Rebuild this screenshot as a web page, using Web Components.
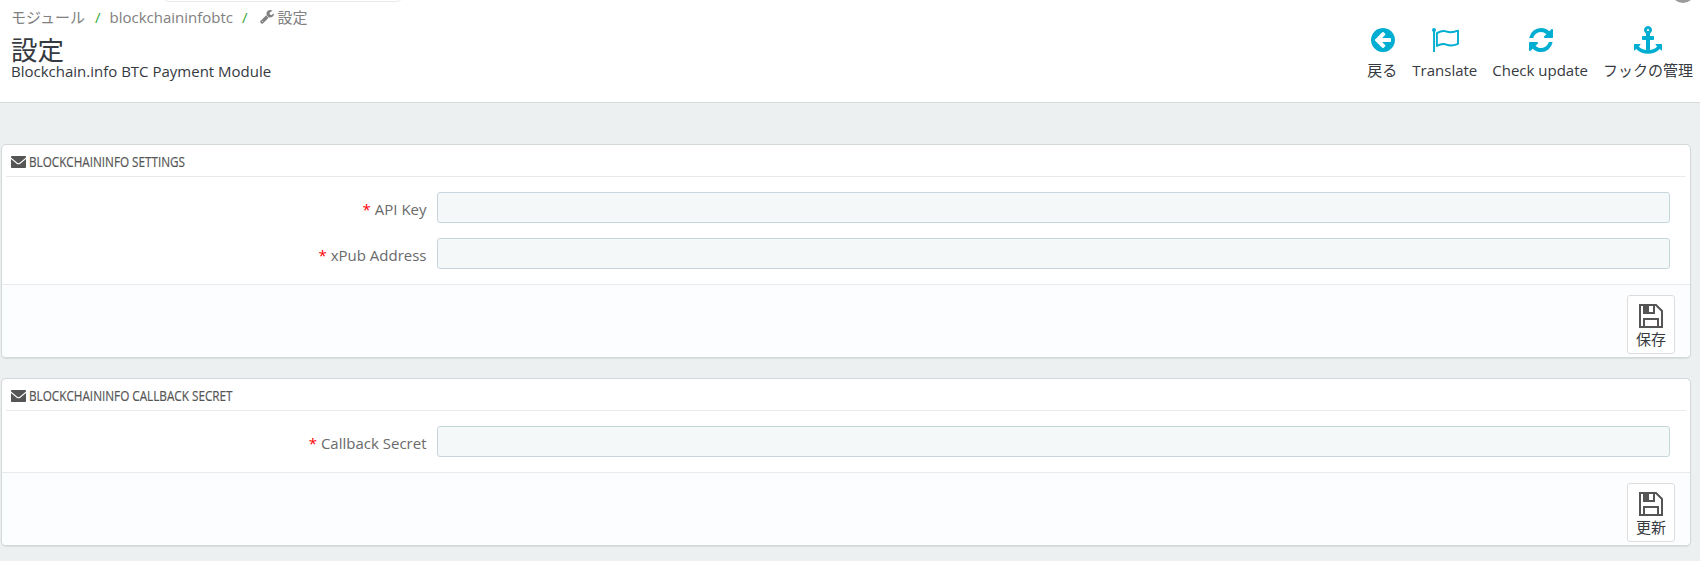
<!DOCTYPE html>
<html lang="ja">
<head>
<meta charset="utf-8">
<title>設定</title>
<style>
html,body{margin:0;height:100%}
body{background:#ecf0f1;font:15px/20px "Open Sans","Noto Sans CJK JP",sans-serif;color:#363a41;overflow:hidden}
</style>
</head>
<body>
<admin-page></admin-page>
<script>
const ICONS = {
  back: ['128 128 1536 1536', '<path d="M1408 960v-128q0-26-19-45t-45-19h-502l189-189q19-19 19-45t-19-45l-91-91q-18-18-45-18t-45 18l-362 362-91 91q-18 18-18 45t18 45l91 91 362 362q18 18 45 18t45-18l91-91q18-18 18-45t-18-45l-189-189h502q26 0 45-19t19-45zm256-64q0 209-103 385.5t-279.5 279.5-385.5 103-385.5-103-279.5-279.5-103-385.5 103-385.5 279.5-279.5 385.5-103 385.5 103 279.5 279.5 103 385.5z"/>'],
  refresh: ['128 128 1536 1536', '<path d="M1639 1056q0 5-1 7-64 268-268 434.5t-478 166.5q-146 0-282.5-55t-243.5-157l-129 129q-19 19-45 19t-45-19-19-45v-448q0-26 19-45t45-19h448q26 0 45 19t19 45-19 45l-137 137q71 66 161 102t187 36q134 0 250-65t186-179q11-17 53-117 8-23 30-23h192q13 0 22.5 9.5t9.5 22.5zm25-800v448q0 26-19 45t-45 19h-448q-26 0-45-19t-19-45 19-45l138-138q-148-137-349-137-134 0-250 65t-186 179q-11 17-53 117-8 23-30 23h-199q-13 0-22.5-9.5t-9.5-22.5v-7q65-268 270-434.5t480-166.5q146 0 284 55.5t245 156.5l130-129q19-19 45-19t45 19 19 45z"/>'],
  anchor: ['0 0 1792 1792', '<path d="M960 256q0-26-19-45t-45-19-45 19-19 45 19 45 45 19 45-19 19-45zm832 928v352q0 22-20 30-8 2-12 2-13 0-23-9l-93-93q-119 143-318.5 226.5t-429.5 83.5-429.5-83.500-318.5-226.500l-93 93q-9 9-23 9-4 0-12-2-20-8-20-30v-352q0-14 9-23t23-9h352q22 0 30 20 8 19-7 35l-100 100q67 91 189.500 153.500t271.500 82.500v-647h-192q-26 0-45-19t-19-45v-128q0-26 19-45t45-19h192v-163q-58-34-93-92.500t-35-128.500q0-106 75-181t181-75 181 75 75 181q0 70-35 128.500t-93 92.500v163h192q26 0 45 19t19 45v128q0 26-19 45t-45 19h-192v647q149-20 271.500-82.500t189.500-153.500l-100-100q-15-16-7-35 8-20 30-20h352q14 0 23 9t9 23z"/>'],
  wrench: ['64 128 1664 1664', '<path d="M448 1472q0-26-19-45t-45-19-45 19-19 45 19 45 45 19 45-19 19-45zm644-420l-682 682q-37 37-90 37-52 0-91-37l-106-108q-38-36-38-90 0-53 38-91l681-681q39 98 114.500 173.500t173.500 114.500zm634-435q0 39-23 106-47 134-164.500 217.500t-258.500 83.500q-185 0-316.500-131.500t-131.500-316.500 131.500-316.500 316.500-131.500q58 0 121.500 16.500t107.500 46.500q16 11 16 28t-16 28l-293 169v224l193 107q5-3 79-48.500t135.500-81 70.500-35.500q15 0 23.500 10t8.500 25z"/>'],
  flag: ['0 0 27 24', '<circle cx="2" cy="2" r="2"/><path d="M1.100 2h1.900v22h-1.900z"/><path d="M4.900 5.100C8 3.400 11 2.300 14 3.400s7 1.200 12-.7v13.100c-5 2.200-8 2.200-11.500.8-3.200-1.200-6.300-.5-9.600 1.300z" fill="none" stroke="currentColor" stroke-width="1.900" stroke-linejoin="round"/>'],
  envelope: ['0 0 15 12', '<path d="M.8 0h13.400q.8 0 .8.800v.7L8.700 6.700q-1.200.9-2.400 0L0 1.500V.8Q0 0 .8 0z"/><path d="M0 3l5.700 4.700q1.800 1.200 3.600 0L15 3v8.200q0 .8-.8.800H.8q-.8 0-.8-.8z"/>'],
  save: ['0 0 24 24', '<path d="M1 1h16l6 6v16H1z" fill="none" stroke="currentColor" stroke-width="2"/><path d="M4 1h6v9H4z"/><path d="M5 1v8h10V1M5 23v-8h14v8" fill="none" stroke="currentColor" stroke-width="2"/>'],
};
const define = (name, html) => customElements.define(name, class extends HTMLElement {
  connectedCallback() {
    if (this.shadowRoot) return;
    const t = document.createElement('template');
    t.innerHTML = typeof html === 'function' ? html(this) : html;
    this.attachShadow({mode: 'open'}).append(t.content.cloneNode(true));
  }
});

define('ui-icon', el => {
  const [box, art] = ICONS[el.getAttribute('name')];
  return `<style>:host{display:inline-block;flex:none}svg{display:block;width:100%;height:100%}</style>
  <svg viewBox="${box}" fill="currentColor" preserveAspectRatio="none">${art}</svg>`;
});

define('bread-crumb', `<style>
:host{display:flex;align-items:center;height:20px;color:#808080;white-space:nowrap}
i{font-style:normal;color:#3aa935;margin:0 9px}
i:first-of-type{margin-left:10px}
ui-icon{width:14px;height:14px;margin:0 4px 0 3px}
</style><span>モジュール</span><i>/</i><span>blockchaininfobtc</span><i>/</i><ui-icon name="wrench"></ui-icon><span>設定</span>`);

define('tool-action', el => `<style>
:host{display:flex;flex-direction:column;align-items:center;white-space:nowrap}
.box{height:32px;display:flex;align-items:center;color:#00aed2;padding-left:${el.getAttribute('nudge') || 0}px}
ui-icon{width:${el.getAttribute('w')}px;height:${el.getAttribute('h')}px}
span{margin-top:4px}
</style><div class="box"><ui-icon name="${el.getAttribute('icon')}"></ui-icon></div><span><slot></slot></span>`);

define('page-head', `<style>
:host{display:flex;justify-content:space-between;box-sizing:border-box;height:103px;background:#fff;border-bottom:1px solid #d8dbde;position:relative;overflow:hidden}
.left{padding:7px 0 0 11px}
h1{font-size:26.500px;line-height:22px;font-weight:400;margin:12px 0 0}
p{margin:0}
nav{display:flex;gap:15px;padding:24px 7px 0 0}
.search{position:absolute;left:163px;top:-28px;width:240px;height:30px;box-sizing:border-box;border:1px solid #e8ebed;border-radius:6px}
.avatar{position:absolute;left:1671px;top:-21px;width:24px;height:24px;border-radius:50%;background:#9b9b9b}
</style>
<div class="search"></div><div class="avatar"></div>
<div class="left"><bread-crumb></bread-crumb><h1>設定</h1><p>Blockchain.info BTC Payment Module</p></div>
<nav><tool-action icon="back" w="24" h="24" nudge="1">戻る</tool-action><tool-action icon="flag" w="27" h="24" nudge="2">Translate</tool-action><tool-action icon="refresh" w="24" h="24" nudge="1">Check update</tool-action><tool-action icon="anchor" w="28" h="28">フックの管理</tool-action></nav>`);

define('form-row', `<style>
:host{display:grid;grid-template-columns:424.500px 1fr;column-gap:10.500px;height:31px}
label{text-align:right;padding-top:7px;color:#6a6a6a}
b{font-weight:400;color:#f00}
input{box-sizing:border-box;width:100%;height:31px;border:1px solid #c7d6db;border-radius:3px;background:#f5f8f9;margin:0;padding:0 8px;font:inherit}
</style><label><b>*</b> <slot></slot></label><input type="text">`);

define('save-button', `<style>
:host{display:block}
button{box-sizing:border-box;width:48px;height:59px;border:1px solid #ddd;border-radius:3px;background:#fff;padding:8px 0 0;display:flex;flex-direction:column;align-items:center;font:inherit;color:#555}
ui-icon{width:24px;height:24px}
span{color:#363a41;margin-top:1px}
</style><button><ui-icon name="save"></ui-icon><span><slot></slot></span></button>`);

define('form-panel', el => `<style>
:host{display:block;box-sizing:border-box;border:1px solid #d3d8db;border-radius:5px;background:#fff;box-shadow:0 1px 1px rgba(0,0,0,.08);overflow:hidden}
header{display:flex;align-items:center;height:31px;margin:0 4px;padding-left:5px;border-bottom:1px solid #e8eaec;color:#555}
header ui-icon{width:15px;height:12px;margin:3px 3px 0 0}
h2{font-size:14px;line-height:20px;font-weight:400;margin:3px 0 0;transform-origin:0 50%;transform:scaleX(${el.getAttribute('squeeze')});-webkit-text-stroke:.2px;white-space:nowrap}
.rows{display:grid;gap:15px;padding:15px 20px 15px 0}
footer{display:flex;justify-content:flex-end;box-sizing:border-box;height:73px;border-top:1px solid #e8eaec;background:#fcfdfe;padding:10px 15px 0 0}
</style><header><ui-icon name="envelope"></ui-icon><h2>${el.getAttribute('heading')}</h2></header>
<div class="rows"><slot></slot></div><footer><save-button>${el.getAttribute('action')}</save-button></footer>`);

define('admin-page', `<style>
:host{display:block}
main{display:grid;gap:20px;padding:41px 9px 0 1px}
</style><page-head></page-head><main>
<form-panel heading="BLOCKCHAININFO SETTINGS" action="保存" squeeze=".836"><form-row>API Key</form-row><form-row>xPub Address</form-row></form-panel>
<form-panel heading="BLOCKCHAININFO CALLBACK SECRET" action="更新" squeeze=".838"><form-row>Callback Secret</form-row></form-panel>
</main>`);
</script>
</body>
</html>
